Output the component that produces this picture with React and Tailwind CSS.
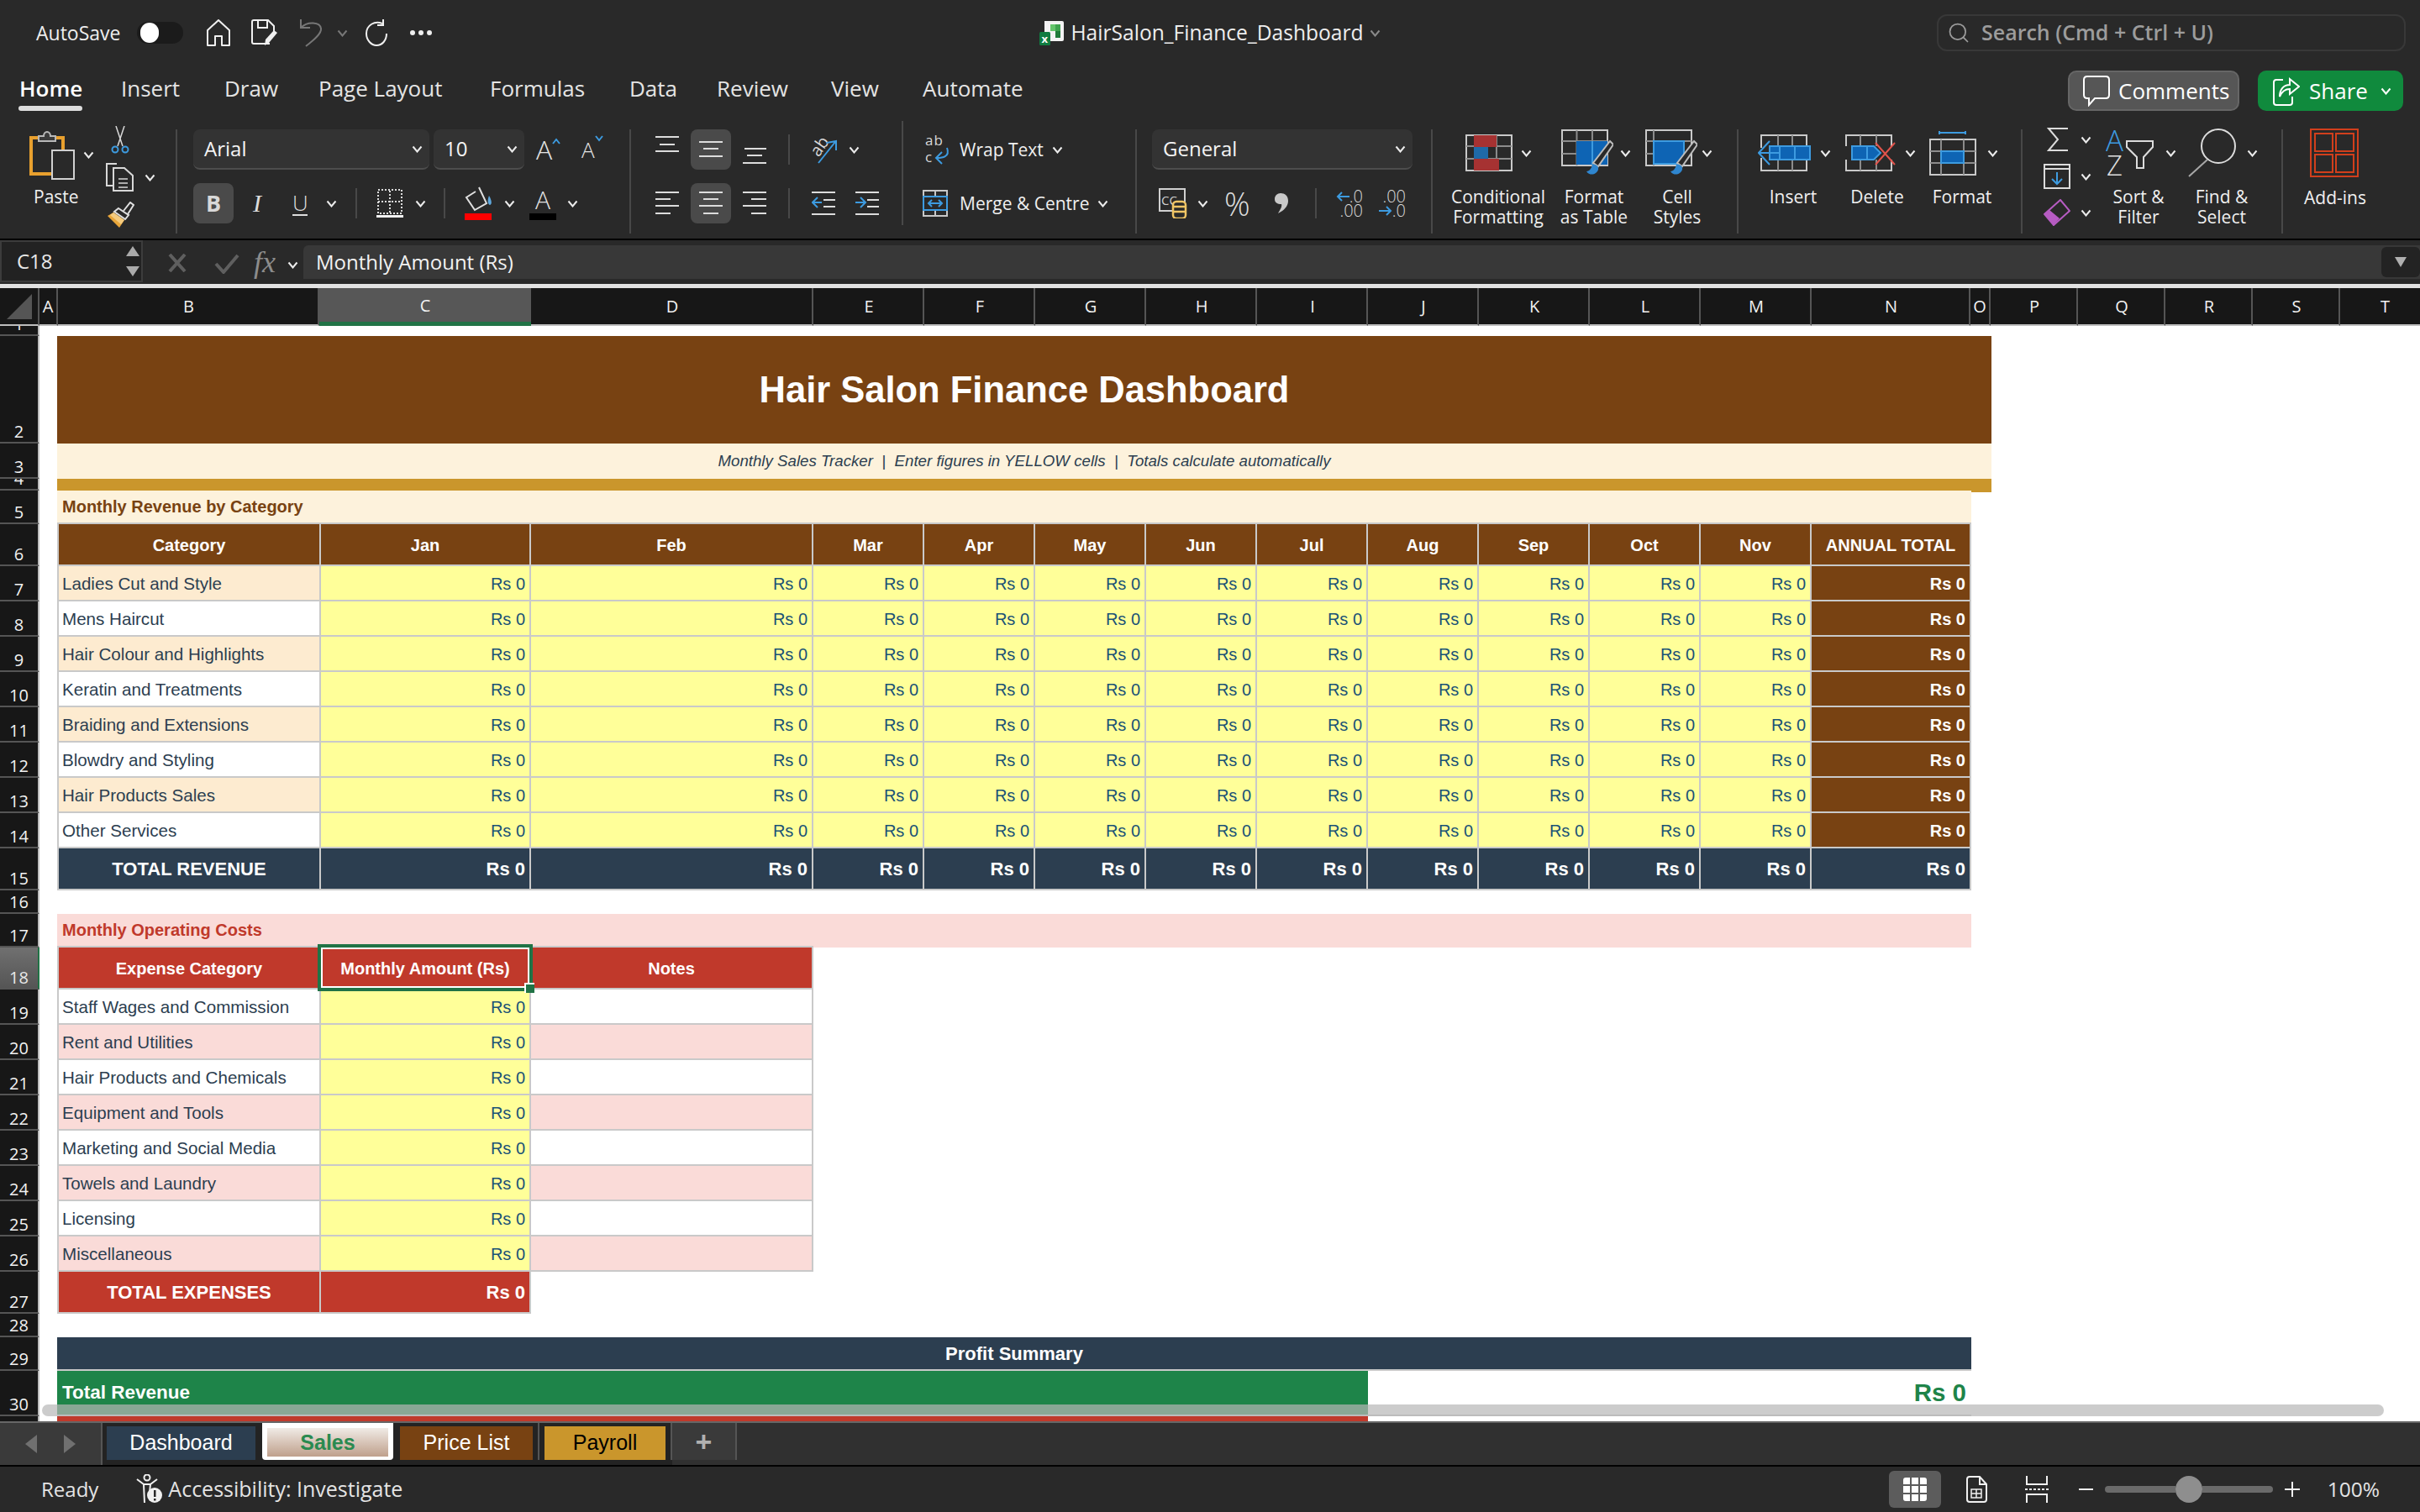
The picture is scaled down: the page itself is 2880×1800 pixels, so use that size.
import { Search } from 'lucide-react';

const TRACKS = 'grid-cols-[47px_21px_314px_250px_336px_repeat(9,132px)_190px_24px_1fr]';
const LINE = 'border-[#c9c9c9]';

const Chev = ({ className = '', color = '#ececec' }) => (
  <svg width="13" height="9" viewBox="0 0 13 9" className={`shrink-0 ${className}`}>
    <path d="M1.5 1.5 6.5 7.5 11.5 1.5" stroke={color} fill="none" strokeWidth="2" />
  </svg>
);

// three or four short bars, used by all the alignment buttons
const Lines = ({ rows, w = 28, h = 48, color = '#dcdcdc', children }) => (
  <svg width={w} height={h} viewBox={`0 0 ${w} ${h}`} className="shrink-0">
    {rows.map(([x, y, l], i) => (
      <rect key={i} x={x} y={y} width={l} height="2" fill={color} />
    ))}
    {children}
  </svg>
);

const PasteIcon = () => (
  <svg width="54" height="60" viewBox="0 0 54 60" className="shrink-0">
    <path d="M11 10H2V53H26" stroke="#e8a02e" strokeWidth="4" fill="none" />
    <path d="M29 10H40V24" stroke="#e8a02e" strokeWidth="4" fill="none" />
    <path d="M11 14V8H17A4 5 0 0 1 25 8H31V14Z" stroke="#b8b8b8" strokeWidth="2" fill="#3b3b3b" />
    <rect x="27" y="25" width="26" height="34" stroke="#d0d0d0" strokeWidth="2" fill="#292929" />
  </svg>
);

const Scissors = () => (
  <svg width="22" height="34" viewBox="0 0 22 34" className="shrink-0">
    <path d="M6 0 14 24M16 0 8 24" stroke="#d8d8d8" strokeWidth="1.5" fill="none" />
    <circle cx="5" cy="28" r="3.5" stroke="#3d9be0" strokeWidth="2" fill="none" />
    <circle cx="17" cy="28" r="3.5" stroke="#3d9be0" strokeWidth="2" fill="none" />
  </svg>
);

const CopyIcon = () => (
  <svg width="34" height="34" viewBox="0 0 34 34" className="shrink-0">
    <path d="M13 1H1V27H8" stroke="#d8d8d8" strokeWidth="2" fill="none" />
    <path d="M9 6H22L32 15V33H9Z" stroke="#d8d8d8" strokeWidth="2" fill="#292929" />
    <path d="M15 19H26M15 24H26M15 29H26" stroke="#d8d8d8" strokeWidth="1.5" />
  </svg>
);

const Painter = () => (
  <svg width="34" height="32" viewBox="0 0 34 32" className="shrink-0">
    <path d="M21 11 29 1 33 4 26 15" stroke="#e0e0e0" strokeWidth="2" fill="none" />
    <path d="M15 8 27 16 23 21 10 12Z" stroke="#e0e0e0" strokeWidth="2" fill="#292929" />
    <path d="M9 13 22 22 16 31 2 17Z" fill="#e9a63a" />
    <path d="M9 13 22 22 18 27 5 16Z" fill="#f4cb7f" />
  </svg>
);

const Bucket = () => (
  <svg width="34" height="32" viewBox="0 0 34 32" className="shrink-0">
    <path d="M17 1 26 20 12 28 2 13 13 6" stroke="#e0e0e0" strokeWidth="2" fill="none" />
    <path d="M29 11C32 16 33 21 30 22 27 21 27 16 29 11Z" fill="#5fa8dd" />
  </svg>
);

const BorderIcon = () => (
  <svg width="32" height="34" viewBox="0 0 32 34" className="shrink-0">
    <rect x="2" y="1" width="28" height="28" stroke="#dcdcdc" strokeWidth="2" strokeDasharray="2 2" fill="none" />
    <path d="M16 2V29M2 15H30" stroke="#dcdcdc" strokeWidth="2" strokeDasharray="2 2" />
    <rect x="0" y="31" width="32" height="3" fill="#f2f2f2" />
  </svg>
);

const Orient = () => (
  <svg width="36" height="36" viewBox="0 0 36 36" className="shrink-0">
    <text x="2" y="22" fontSize="20" fill="#d8d8d8" transform="rotate(-55 12 16)" fontFamily="Open Sans">ab</text>
    <path d="M11 34 31 9M21 10 32 8 32 19" stroke="#3d9be0" strokeWidth="2" fill="none" />
  </svg>
);

const Indent = ({ flip }) => (
  <Lines w={28} h={48} rows={[[0, 10, 28], [14, 19, 14], [14, 27, 14], [0, 36, 28]]}>
    <path d={flip ? 'M0 23H11M6 17 12 23 6 29' : 'M12 23H1M7 17 1 23 7 29'} stroke="#3d9be0" strokeWidth="2" fill="none" />
  </Lines>
);

const WrapIcon = () => (
  <svg width="30" height="38" viewBox="0 0 30 38" className="shrink-0">
    <text x="0" y="14" fontSize="17" fill="#d8d8d8" fontFamily="Open Sans" letterSpacing="1">ab</text>
    <text x="0" y="34" fontSize="17" fill="#d8d8d8" fontFamily="Open Sans">c</text>
    <path d="M26 17C30 28 20 29 14 29M20 22 13 29 20 36" stroke="#3d9be0" strokeWidth="2" fill="none" />
  </svg>
);

const MergeIcon = () => (
  <svg width="30" height="32" viewBox="0 0 30 32" className="shrink-0">
    <rect x="1" y="1" width="28" height="30" stroke="#c8c8c8" strokeWidth="2" fill="none" />
    <path d="M15 1V8M15 24V31" stroke="#c8c8c8" strokeWidth="2" />
    <rect x="1" y="8" width="28" height="16" stroke="#3d9be0" strokeWidth="2" fill="none" />
    <path d="M7 16H23M11 12 7 16 11 20M19 12 23 16 19 20" stroke="#3d9be0" strokeWidth="2" fill="none" />
  </svg>
);

const NumFormat = () => (
  <svg width="34" height="36" viewBox="0 0 34 36" className="shrink-0">
    <rect x="1" y="1" width="30" height="26" stroke="#d0d0d0" strokeWidth="2" fill="none" />
    <text x="3" y="20" fontSize="15" fill="#d0d0d0" fontFamily="Open Sans">CC</text>
    <rect x="17" y="16" width="15" height="20" rx="4" stroke="#f0c565" strokeWidth="2.5" fill="#292929" />
    <path d="M17 22H32M17 28H32" stroke="#f0c565" strokeWidth="2.5" />
  </svg>
);

const CommaIcon = () => (
  <svg width="18" height="24" viewBox="0 0 18 24" className="shrink-0">
    <path d="M8 0C13 0 17 3 17 9 17 15 13 20 5 24 8 19 10 16 9 13 4 13 1 11 1 7 1 3 4 0 8 0Z" fill="#c8c8c8" />
  </svg>
);

const DecMore = () => (
  <div className="h-[34px] w-[32px] text-[20px] font-light leading-[17px] text-[#d8d8d8]">
    <div className="flex items-center justify-end">
      <svg width="16" height="14" viewBox="0 0 16 14" className="shrink-0">
        <path d="M16 7H2M7 2 2 7 7 12" stroke="#3d9be0" strokeWidth="2" fill="none" />
      </svg>
      <span>.0</span>
    </div>
    <div className="text-right">.00</div>
  </div>
);

const DecLess = () => (
  <div className="h-[34px] w-[32px] text-[20px] font-light leading-[17px] text-[#d8d8d8]">
    <div className="text-right">.00</div>
    <div className="flex items-center justify-end">
      <svg width="16" height="14" viewBox="0 0 16 14" className="shrink-0">
        <path d="M0 7H14M9 2 14 7 9 12" stroke="#3d9be0" strokeWidth="2" fill="none" />
      </svg>
      <span>.0</span>
    </div>
  </div>
);

const TableFrame = ({ w = 56 }) => (
  <>
    <rect x="1" y="1" width={w - 2} height="42" stroke="#c9c9c9" strokeWidth="2" fill="none" />
    <path d={`M1 14H${w - 1}M1 29H${w - 1}M${w * 0.33} 1V43M${w * 0.66} 1V43`} stroke="#8c8c8c" strokeWidth="2" />
  </>
);

const CondIcon = () => (
  <svg width="56" height="44" viewBox="0 0 56 44" className="shrink-0">
    <TableFrame />
    <rect x="10" y="1" width="27" height="14" fill="#a63232" />
    <rect x="10" y="15" width="17" height="14" fill="#1f6aa8" />
    <rect x="10" y="29" width="30" height="14" fill="#a63232" />
  </svg>
);

const Brush = () => (
  <g>
    <path d="M58 14 62 18 44 44 38 40Z" fill="#292929" stroke="#bdbdbd" strokeWidth="2" />
    <path d="M30 50C34 50 36 46 37 42 41 41 45 44 44 48 42 54 34 56 30 50Z" fill="#2f86cf" />
  </g>
);

const TableStyleIcon = () => (
  <svg width="62" height="56" viewBox="0 0 62 56" className="shrink-0">
    <TableFrame />
    <rect x="18" y="14" width="37" height="28" fill="#0e64b4" />
    <path d="M37 14V42" stroke="#3d9be0" strokeWidth="2" />
    <Brush />
  </svg>
);

const CellStyleIcon = () => (
  <svg width="62" height="56" viewBox="0 0 62 56" className="shrink-0">
    <rect x="1" y="1" width="54" height="42" stroke="#c9c9c9" strokeWidth="2" fill="none" />
    <path d="M1 14H55M1 29H10M10 1V43" stroke="#8c8c8c" strokeWidth="2" />
    <rect x="10" y="14" width="36" height="27" fill="#0e64b4" stroke="#3d9be0" strokeWidth="2" />
    <Brush />
  </svg>
);

const InsertIcon = () => (
  <svg width="64" height="44" viewBox="0 0 64 44" className="shrink-0">
    <path d="M4 16V1H58V43H4V28" stroke="#c9c9c9" strokeWidth="2" fill="none" />
    <path d="M24 1V43M41 1V43" stroke="#8c8c8c" strokeWidth="2" />
    <rect x="14" y="14" width="48" height="16" fill="#0e64b4" stroke="#3d9be0" strokeWidth="2" />
    <path d="M26 14V30M44 14V30" stroke="#3d9be0" strokeWidth="2" />
    <path d="M14 8 1 22 14 36M1 22H26" stroke="#3d9be0" strokeWidth="2" fill="none" />
  </svg>
);

const DeleteIcon = () => (
  <svg width="62" height="44" viewBox="0 0 62 44" className="shrink-0">
    <path d="M1 14V1H55V14M1 30V43H55V30" stroke="#c9c9c9" strokeWidth="2" fill="none" />
    <path d="M18 1V14M37 1V14M18 30V43M37 30V43" stroke="#8c8c8c" strokeWidth="2" />
    <path d="M8 14H34L42 22 34 30H8Z" fill="#0e64b4" stroke="#3d9be0" strokeWidth="2" />
    <path d="M26 14V30" stroke="#3d9be0" strokeWidth="2" />
    <path d="M36 10 59 36M59 10 36 36" stroke="#e2534b" strokeWidth="2" />
  </svg>
);

const FormatIcon = () => (
  <svg width="56" height="54" viewBox="0 0 56 54" className="shrink-0">
    <path d="M12 1V5M43 1V5M12 3H43" stroke="#3d9be0" strokeWidth="2" />
    <rect x="1" y="11" width="54" height="42" stroke="#c9c9c9" strokeWidth="2" fill="none" />
    <path d="M1 25H55M1 39H55M14 11V53M41 11V53" stroke="#8c8c8c" strokeWidth="2" />
    <rect x="14" y="25" width="27" height="14" fill="#0e64b4" stroke="#3d9be0" strokeWidth="2" />
  </svg>
);

const SigmaIcon = () => (
  <svg width="26" height="30" viewBox="0 0 26 30" className="shrink-0">
    <path d="M25 2H2L13 15 2 28H25" stroke="#dcdcdc" strokeWidth="2" fill="none" />
  </svg>
);

const FillDown = () => (
  <svg width="32" height="30" viewBox="0 0 32 30" className="shrink-0">
    <rect x="1" y="1" width="30" height="28" stroke="#dcdcdc" strokeWidth="2" fill="none" />
    <path d="M1 6H31" stroke="#dcdcdc" strokeWidth="2" />
    <path d="M16 10V24M10 18 16 24 22 18" stroke="#3d9be0" strokeWidth="2" fill="none" />
  </svg>
);

const Eraser = () => (
  <svg width="32" height="32" viewBox="0 0 32 32" className="shrink-0">
    <path d="M20 1 31 14 12 31 1 18Z" stroke="#b65cc2" strokeWidth="2" fill="none" />
    <path d="M7 13 19 23 12 31 1 18Z" fill="#b65cc2" />
  </svg>
);

const SortIcon = () => (
  <svg width="58" height="56" viewBox="0 0 58 56" className="shrink-0">
    <text x="0" y="26" fontSize="35" fontWeight="300" fill="#3d9be0" fontFamily="Open Sans">A</text>
    <text x="1" y="55" fontSize="33" fontWeight="300" fill="#dcdcdc" fontFamily="Open Sans">Z</text>
    <path d="M25 14H56V21L45 33V46H37V33L25 21Z" stroke="#dcdcdc" strokeWidth="2" fill="none" />
  </svg>
);

const FindIcon = () => (
  <svg width="58" height="60" viewBox="0 0 58 60" className="shrink-0">
    <ellipse cx="36" cy="22" rx="20" ry="20" stroke="#dcdcdc" strokeWidth="2" fill="none" />
    <path d="M23 38 1 58" stroke="#a8a8a8" strokeWidth="2" />
  </svg>
);

const AddIns = () => (
  <svg width="58" height="58" viewBox="0 0 58 58" className="shrink-0">
    <rect x="1" y="1" width="56" height="56" stroke="#d13f1c" strokeWidth="2" fill="none" />
    <rect x="6" y="6" width="21" height="21" stroke="#d13f1c" strokeWidth="2" fill="none" />
    <rect x="31" y="6" width="21" height="21" stroke="#d13f1c" strokeWidth="2" fill="none" />
    <rect x="6" y="31" width="21" height="21" stroke="#d13f1c" strokeWidth="2" fill="none" />
    <rect x="31" y="31" width="21" height="21" stroke="#d13f1c" strokeWidth="2" fill="none" />
  </svg>
);

const ExcelDoc = () => (
  <svg width="30" height="30" viewBox="0 0 30 30" className="shrink-0">
    <path d="M6 1H27Q29 1 29 3V23Q29 25 27 25H6Z" fill="#f3f3f3" />
    <rect x="13" y="5" width="6" height="8" fill="#63c46a" />
    <rect x="19" y="5" width="6" height="8" fill="#3da34d" />
    <rect x="19" y="13" width="6" height="8" fill="#1f7a3a" />
    <rect x="0" y="14" width="13" height="16" rx="1.5" fill="#107c41" />
    <text x="2.5" y="27" fontSize="13" fontWeight="700" fill="#fff" fontFamily="Open Sans">x</text>
  </svg>
);

function BigBtn({ w, ml, icon, chevMl = 'ml-[10px]', lines }) {
  return (
    <div className={`flex flex-col ${w}`}>
      <div className={`flex h-[64px] items-center ${ml}`}>
        {icon}
        <Chev className={chevMl} />
      </div>
      <div className="mt-[8px] text-center leading-[24px]">
        {lines.map((l) => (
          <div key={l}>{l}</div>
        ))}
      </div>
    </div>
  );
}

const Sep = ({ className = 'mt-[14px]' }) => <div className={`h-[124px] w-[2px] shrink-0 bg-[#484848] ${className}`} />;
const SmallSep = () => <div className="h-[36px] w-[2px] shrink-0 bg-[#484848]" />;

function Dropdown({ w, label }) {
  return (
    <div className={`flex h-[48px] items-center justify-between rounded-[8px] border-b-2 border-[#4d4d4d] bg-[#333333] pl-[13px] pr-[8px] text-[24px] text-[#f4f4f4] ${w}`}>
      {label}
      <Chev />
    </div>
  );
}

function TitleBar() {
  return (
    <div className="flex h-[75px] items-center bg-[#292929] pt-[3px] text-[#eeeeee]">
      <span className="ml-[43px] text-[23px]">AutoSave</span>
      <div className="ml-[20px] flex h-[26px] w-[55px] items-center rounded-full bg-[#1b1b1b] pl-[4px]">
        <div className="h-[24px] w-[22px] rounded-full bg-white" />
      </div>
      <svg width="30" height="32" viewBox="0 0 30 32" className="ml-[27px]">
        <path d="M2 31V13L15 1 28 13V31H19V20H11V31Z" stroke="#f0f0f0" strokeWidth="2" fill="none" strokeLinejoin="round" />
      </svg>
      <svg width="32" height="32" viewBox="0 0 32 32" className="ml-[24px]">
        <path d="M22 29H3Q1 29 1 27V3Q1 1 3 1H20L27 8V14" stroke="#f0f0f0" strokeWidth="2" fill="none" />
        <path d="M8 1V10H19V1" stroke="#f0f0f0" strokeWidth="2" fill="none" />
        <path d="M16 31 17 24 27 13 31 16 21 28Z" fill="#f0f0f0" />
      </svg>
      <svg width="28" height="34" viewBox="0 0 28 34" className="ml-[25px]">
        <path d="M2 1V11H13M2 11C10 3 25 4 26 12 27 18 17 26 8 33" stroke="#777777" strokeWidth="2" fill="none" />
      </svg>
      <Chev className="ml-[17px]" color="#777777" />
      <svg width="28" height="32" viewBox="0 0 28 32" className="ml-[20px]">
        <path d="M21 5C12 1 2 7 2 17 2 25 8 31 14 31 21 31 26 25 26 17M22 0V7H15" stroke="#f0f0f0" strokeWidth="2" fill="none" />
      </svg>
      <span className="ml-[26px] flex gap-[4px]">
        <span className="h-[6px] w-[6px] rounded-full bg-[#eeeeee]" />
        <span className="h-[6px] w-[6px] rounded-full bg-[#eeeeee]" />
        <span className="h-[6px] w-[6px] rounded-full bg-[#eeeeee]" />
      </span>
      <div className="ml-[723px]"><ExcelDoc /></div>
      <span className="ml-[7px] text-[24.6px]">HairSalon_Finance_Dashboard</span>
      <Chev className="ml-[7px]" color="#8a8a8a" />
      <div className="ml-auto mr-[17px] flex h-[44px] w-[558px] items-center rounded-[12px] border-2 border-[#383838] pl-[10px] text-[25px] font-semibold text-[#9c9c9c]">
        <Search size={28} strokeWidth={1.5} />
        <span className="ml-[13px]">Search (Cmd + Ctrl + U)</span>
      </div>
    </div>
  );
}

function TabsRow() {
  const tabs = [
    ['Home', 'w-[121px] pl-[23px]'],
    ['Insert', 'w-[146px] pl-[23px]'],
    ['Draw', 'w-[112px]'],
    ['Page Layout', 'w-[204px]'],
    ['Formulas', 'w-[166px]'],
    ['Data', 'w-[104px]'],
    ['Review', 'w-[136px]'],
    ['View', 'w-[109px]'],
    ['Automate', 'w-[130px]'],
  ];
  return (
    <div className="flex h-[65px] bg-[#292929] text-[26px] font-medium text-[#e4e4e4]">
      <div className="flex">
        {tabs.map(([t, c], i) => (
          <div key={t} className={`relative h-[65px] pt-[11px] leading-[38px] ${c} ${i === 0 ? 'font-semibold text-white' : ''}`}>
            {t}
            {i === 0 && <div className="absolute bottom-[8px] left-[22px] h-[6px] w-[76px] rounded-full bg-[#dddddd]" />}
          </div>
        ))}
      </div>
      <div className="ml-auto mr-[20px] mt-[9px] flex h-[48px]">
        <div className="flex w-[204px] items-center rounded-[10px] border-2 border-[#666666] bg-[#565656] pl-[15px] text-white">
          <svg width="34" height="38" viewBox="0 0 34 38">
            <path d="M6 2H28Q32 2 32 6V24Q32 28 28 28H15L8 36V28H6Q2 28 2 24V6Q2 2 6 2Z" stroke="#ffffff" strokeWidth="2" fill="none" />
          </svg>
          <span className="ml-[9px]">Comments</span>
        </div>
        <div className="ml-[22px] flex w-[173px] items-center rounded-[10px] bg-[#108a3d] pl-[18px] text-white">
          <svg width="32" height="38" viewBox="0 0 32 38">
            <path d="M12 6H4Q1 6 1 9V33Q1 36 4 36H20Q23 36 23 33V26" stroke="#ffffff" strokeWidth="2" fill="none" />
            <path d="M8 26C8 17 13 12 20 12V5L31 14 20 23V17C15 17 11 19 8 26Z" stroke="#ffffff" strokeWidth="2" fill="none" />
          </svg>
          <span className="ml-[11px]">Share</span>
          <Chev className="ml-[15px]" color="#ffffff" />
        </div>
      </div>
    </div>
  );
}

function Ribbon() {
  return (
    <div className="flex h-[144px] bg-[#292929] text-[21px] leading-[26px] text-[#f0f0f0]">
      {/* clipboard */}
      <div className="flex w-[209px] shrink-0 pt-[10px]">
        <div className="ml-[35px] flex w-[75px] flex-col">
          <div className="mt-[4px] flex items-center">
            <PasteIcon />
            <Chev className="ml-[10px]" />
          </div>
          <span className="ml-[5px] mt-[7px]">Paste</span>
        </div>
        <div className="ml-[16px] flex flex-col">
          <div className="ml-[6px]"><Scissors /></div>
          <div className="mt-[10px] flex items-center"><CopyIcon /><Chev className="ml-[12px]" /></div>
          <div className="mt-[12px]"><Painter /></div>
        </div>
      </div>
      <Sep />
      {/* font */}
      <div className="flex w-[538px] shrink-0 flex-col gap-[16px] pl-[19px] pt-[14px]">
        <div className="flex h-[48px] items-center">
          <Dropdown w="w-[281px]" label="Arial" />
          <div className="ml-[5px]"><Dropdown w="w-[108px]" label="10" /></div>
          <span className="ml-[14px] flex w-[30px] items-start text-[32px] font-light leading-[36px] text-[#e4e4e4]">
            A
            <svg width="10" height="8" viewBox="0 0 10 8" className="mt-[4px] shrink-0"><path d="M1 7 5 2 9 7" stroke="#3d9be0" strokeWidth="2" fill="none" /></svg>
          </span>
          <span className="ml-[24px] flex w-[30px] items-start text-[26px] font-light leading-[36px] text-[#e4e4e4]">
            A
            <svg width="10" height="8" viewBox="0 0 10 8" className="mt-[1px] shrink-0"><path d="M1 1 5 6 9 1" stroke="#3d9be0" strokeWidth="2" fill="none" /></svg>
          </span>
        </div>
        <div className="flex h-[48px] items-center">
          <div className="flex h-[48px] w-[48px] items-center justify-center rounded-[8px] bg-[#4a4a4a] text-[27px] font-bold text-[#d8d8d8]">B</div>
          <span className="ml-[22px] w-[12px] text-center font-['Liberation_Serif',serif] text-[30px] italic text-[#dddddd]">I</span>
          <span className="ml-[36px] w-[18px] border-b-2 border-[#dddddd] text-center text-[26px] font-light leading-[28px] text-[#dddddd]">U</span>
          <Chev className="ml-[22px]" />
          <div className="ml-[22px]"><SmallSep /></div>
          <div className="ml-[23px]"><BorderIcon /></div>
          <Chev className="ml-[14px]" />
          <div className="ml-[21px]"><SmallSep /></div>
          <div className="ml-[23px] flex flex-col">
            <Bucket />
            <div className="h-[8px] w-[32px] bg-[#ff0000]" />
          </div>
          <Chev className="ml-[13px]" />
          <div className="ml-[17px] flex w-[32px] flex-col items-center">
            <span className="text-[30px] font-light leading-[32px] text-[#e4e4e4]">A</span>
            <div className="h-[8px] w-[32px] bg-black" />
          </div>
          <Chev className="ml-[13px]" />
        </div>
      </div>
      <Sep />
      {/* alignment */}
      <div className="flex w-[322px] shrink-0 flex-col gap-[16px] pl-[29px] pt-[14px]">
        <div className="flex h-[48px] items-center">
          <Lines rows={[[0, 8, 28], [5, 17, 18], [0, 25, 28]]} />
          <div className="ml-[14px] flex h-[48px] w-[48px] items-center justify-center rounded-[8px] bg-[#4a4a4a]">
            <Lines rows={[[0, 14, 28], [5, 22, 18], [0, 31, 28]]} />
          </div>
          <div className="ml-[14px]"><Lines rows={[[2, 22, 26], [5, 30, 18], [0, 39, 28]]} /></div>
          <div className="ml-[26px]"><SmallSep /></div>
          <div className="ml-[23px]"><Orient /></div>
          <Chev className="ml-[11px]" />
        </div>
        <div className="flex h-[48px] items-center">
          <Lines rows={[[0, 10, 28], [0, 18, 18], [0, 26, 28], [0, 35, 18]]} />
          <div className="ml-[14px] flex h-[48px] w-[48px] items-center justify-center rounded-[8px] bg-[#4a4a4a]">
            <Lines rows={[[0, 10, 28], [5, 18, 18], [0, 26, 28], [5, 35, 18]]} />
          </div>
          <div className="ml-[14px]"><Lines rows={[[0, 10, 28], [10, 18, 18], [0, 26, 28], [10, 35, 18]]} /></div>
          <div className="ml-[26px]"><SmallSep /></div>
          <div className="ml-[26px]"><Indent /></div>
          <div className="ml-[24px]"><Indent flip /></div>
        </div>
      </div>
      <Sep className="mt-[4px]" />
      {/* wrap / merge */}
      <div className="flex w-[276px] shrink-0 flex-col pl-[23px] pt-[18px]">
        <div className="flex h-[40px] items-center">
          <div className="ml-[3px]"><WrapIcon /></div>
          <span className="ml-[11px]">Wrap Text</span>
          <Chev className="ml-[10px]" />
        </div>
        <div className="mt-[24px] flex h-[40px] items-center">
          <MergeIcon />
          <span className="ml-[14px]">Merge &amp; Centre</span>
          <Chev className="ml-[10px]" />
        </div>
      </div>
      <Sep />
      {/* number */}
      <div className="flex w-[350px] shrink-0 flex-col gap-[16px] pl-[18px] pt-[14px]">
        <Dropdown w="w-[310px]" label="General" />
        <div className="flex h-[48px] items-center">
          <div className="ml-[8px]"><NumFormat /></div>
          <Chev className="ml-[12px]" />
          <span className="ml-[19px] w-[32px] text-[38px] font-light leading-[40px] text-[#dddddd]">%</span>
          <div className="ml-[27px]"><CommaIcon /></div>
          <div className="ml-[31px]"><SmallSep /></div>
          <div className="ml-[23px]"><DecMore /></div>
          <div className="ml-[19px]"><DecLess /></div>
        </div>
      </div>
      <Sep />
      {/* styles */}
      <div className="flex w-[362px] shrink-0 pl-[21px] pt-[10px]">
        <BigBtn w="w-[114px]" ml="ml-[18px]" icon={<CondIcon />} lines={['Conditional', 'Formatting']} />
        <BigBtn w="w-[114px]" ml="ml-[18px]" icon={<TableStyleIcon />} chevMl="ml-[8px]" lines={['Format', 'as Table']} />
        <BigBtn w="w-[84px]" ml="ml-[4px]" icon={<CellStyleIcon />} chevMl="ml-[5px]" lines={['Cell', 'Styles']} />
      </div>
      <Sep />
      {/* cells */}
      <div className="flex w-[336px] shrink-0 pl-[7px] pt-[10px]">
        <BigBtn w="w-[116px]" ml="ml-[16px]" icon={<InsertIcon />} lines={['Insert']} />
        <BigBtn w="w-[84px]" ml="ml-[4px]" icon={<DeleteIcon />} chevMl="ml-[9px]" lines={['Delete']} />
        <BigBtn w="w-[118px]" ml="ml-[20px]" icon={<FormatIcon />} chevMl="ml-[13px]" lines={['Format']} />
      </div>
      <Sep />
      {/* editing */}
      <div className="flex w-[308px] shrink-0 pt-[10px]">
        <div className="ml-[25px] flex w-[68px] flex-col">
          <div className="ml-[4px] flex h-[32px] items-center"><SigmaIcon /><Chev className="ml-[14px]" /></div>
          <div className="mt-[12px] flex h-[32px] items-center"><FillDown /><Chev className="ml-[12px]" /></div>
          <div className="mt-[10px] flex h-[34px] items-center"><Eraser /><Chev className="ml-[12px]" /></div>
        </div>
        <BigBtn w="w-[90px]" ml="ml-[6px]" icon={<SortIcon />} chevMl="ml-[13px]" lines={['Sort &', 'Filter']} />
        <BigBtn w="w-[108px]" ml="ml-[14px]" icon={<FindIcon />} chevMl="ml-[12px]" lines={['Find &', 'Select']} />
      </div>
      <Sep />
      {/* add-ins */}
      <div className="flex w-[124px] shrink-0 flex-col pt-[13px]">
        <div className="ml-[32px] h-[60px]"><AddIns /></div>
        <div className="mt-[9px] text-center">Add-ins</div>
      </div>
    </div>
  );
}

function FormulaBar() {
  return (
    <div className="flex h-[54px] border-t-2 border-black bg-[#292929]">
      <div className="flex h-[50px] w-[170px] items-center justify-between border-2 border-[#3c3c3c] bg-[#222222] pl-[18px] pr-[2px] text-[24px] text-[#e8e8e8]">
        C18
        <div className="flex flex-col gap-[12px]">
          <svg width="16" height="12" viewBox="0 0 16 12"><path d="M8 0 16 12H0Z" fill="#aaaaaa" /></svg>
          <svg width="16" height="12" viewBox="0 0 16 12"><path d="M8 12 16 0H0Z" fill="#aaaaaa" /></svg>
        </div>
      </div>
      <svg width="22" height="22" viewBox="0 0 22 22" className="ml-[30px] mt-[16px] shrink-0">
        <path d="M2 1 20 21M20 1 2 21" stroke="#5f5f5f" strokeWidth="4" />
      </svg>
      <svg width="30" height="24" viewBox="0 0 30 24" className="ml-[33px] mt-[16px] shrink-0">
        <path d="M2 12 11 22 28 2" stroke="#5f5f5f" strokeWidth="4" fill="none" />
      </svg>
      <span className="ml-[17px] mt-[5px] w-[30px] font-['Liberation_Serif',serif] text-[36px] italic leading-[42px] text-[#8c8c8c]">fx</span>
      <Chev className="ml-[10px] mt-[25px]" />
      <div className="ml-[6px] mt-[6px] flex h-[40px] flex-1 items-center rounded-tl-[6px] bg-[#383838] pl-[15px] text-[24px] text-[#f2f2f2]">
        Monthly Amount (Rs)
        <div className="ml-auto flex h-[36px] w-[46px] items-center justify-center rounded-[6px] bg-[#232323]">
          <svg width="14" height="12" viewBox="0 0 14 12"><path d="M0 0H14L7 12Z" fill="#b0b0b0" /></svg>
        </div>
      </div>
    </div>
  );
}

function ColumnHeader() {
  const cols = [
    ['A', 'w-[22px]'], ['B', 'w-[311px]'], ['C', 'w-[252px]'], ['D', 'w-[336px]'],
    ['E', 'w-[132px]'], ['F', 'w-[132px]'], ['G', 'w-[132px]'], ['H', 'w-[132px]'], ['I', 'w-[132px]'],
    ['J', 'w-[132px]'], ['K', 'w-[132px]'], ['L', 'w-[132px]'], ['M', 'w-[132px]'], ['N', 'w-[189px]'],
    ['O', 'w-[24px]'], ['P', 'w-[104px]'], ['Q', 'w-[104px]'], ['R', 'w-[104px]'], ['S', 'w-[104px]'], ['T', 'w-[107px]'],
  ];
  return (
    <div className="flex h-[50px] border-t-[5px] border-[#e2e2e2] bg-[#171717] text-[20px] text-[#f2f2f2]">
      <div className="flex w-[47px] shrink-0 items-center justify-center border-b-2 border-r-2 border-[#555555] border-b-[#bdbdbd]">
        <svg width="30" height="30" viewBox="0 0 30 30"><path d="M30 0V30H0Z" fill="#555555" /></svg>
      </div>
      {cols.map(([c, w]) =>
        c === 'C' ? (
          <div key={c} className={`flex shrink-0 items-center justify-center border-b-[5px] border-[#217346] bg-[#575757] pt-[2px] ${w}`}>{c}</div>
        ) : (
          <div key={c} className={`flex shrink-0 items-center justify-center border-b-2 border-r-2 border-[#555555] border-b-[#bdbdbd] ${c === 'A' || c === 'O' ? '' : 'pl-[2px]'} ${w}`}>{c}</div>
        )
      )}
    </div>
  );
}

function Row({ n, h, active, children }) {
  return (
    <div className={`grid ${TRACKS} ${h}`}>
      <div
        className={`flex items-end justify-center overflow-hidden border-b-2 border-r-2 border-b-[#555555] font-['Open_Sans',sans-serif] text-[20px] leading-[24px] ${
          active ? 'border-r-[#217346] bg-gradient-to-b from-[#707070] to-[#555555] text-[#e8e8e8]' : 'border-r-[#bdbdbd] bg-[#171717] text-[#f2f2f2]'
        }`}
      >
        {n}
      </div>
      <div />
      {children}
    </div>
  );
}

// one bordered table cell
function Cell({ className = '', first, right, children }) {
  return (
    <div className={`flex items-center border-b-2 border-r-2 ${LINE} ${first ? 'border-l-2' : ''} ${right ? 'justify-end pr-[5px]' : ''} ${className}`}>
      {children}
    </div>
  );
}

const HeadCell = ({ bg, first, children }) => (
  <Cell first={first} className={`justify-center pt-[2px] font-bold text-white ${bg}`}>{children}</Cell>
);

const MONTHS = ['Jan', 'Feb', 'Mar', 'Apr', 'May', 'Jun', 'Jul', 'Aug', 'Sep', 'Oct', 'Nov'];
const REVENUE = ['Ladies Cut and Style', 'Mens Haircut', 'Hair Colour and Highlights', 'Keratin and Treatments', 'Braiding and Extensions', 'Blowdry and Styling', 'Hair Products Sales', 'Other Services'];
const COSTS = ['Staff Wages and Commission', 'Rent and Utilities', 'Hair Products and Chemicals', 'Equipment and Tools', 'Marketing and Social Media', 'Towels and Laundry', 'Licensing', 'Miscellaneous'];

const Money = ({ bold, className = 'bg-[#ffff99]' }) => (
  <Cell right className={`pt-[2px] ${className} ${bold ? 'font-bold text-white' : 'text-[#1a5276]'}`}>Rs 0</Cell>
);

function Sheet() {
  return (
    <div className="h-[1304px] overflow-hidden bg-white font-['Liberation_Sans',Arial,sans-serif] text-[20px] text-[#2c3e50]">
      <Row n={1} h="h-[12px]" />
      <Row n={2} h="h-[128px]">
        <div className="col-span-14 flex items-center justify-center bg-[#784212] pt-[1px] text-[43.5px] font-bold text-white">Hair Salon Finance Dashboard</div>
      </Row>
      <Row n={3} h="h-[42px]">
        <div className="col-span-14 flex items-center justify-center whitespace-pre bg-[#fdf2dc] text-[18.7px] italic text-[#2c3e50]">
          {'Monthly Sales Tracker  |  Enter figures in YELLOW cells  |  Totals calculate automatically'}
        </div>
      </Row>
      <Row n={4} h="h-[14px]">
        <div className="col-span-14 bg-[#ca962c]" />
      </Row>
      <Row n={5} h="h-[40px]">
        <div className="col-span-13 flex items-center border-b-2 border-[#c9c9c9] bg-[#fdf2dc] pl-[6px] font-bold text-[#784212]">Monthly Revenue by Category</div>
        <div className="h-[2px] bg-[#ca962c]" />
      </Row>
      <Row n={6} h="h-[50px]">
        <HeadCell first bg="bg-[#784212]">Category</HeadCell>
        {MONTHS.map((m) => (
          <HeadCell key={m} bg="bg-[#784212]">{m}</HeadCell>
        ))}
        <HeadCell bg="bg-[#784212]">ANNUAL TOTAL</HeadCell>
      </Row>
      {REVENUE.map((name, i) => (
        <Row key={name} n={7 + i} h="h-[42px]">
          <Cell first className={`pl-[4px] pt-[2px] text-[20.6px] ${i % 2 === 0 ? 'bg-[#fdebd0]' : 'bg-white'}`}>{name}</Cell>
          {MONTHS.map((m) => (
            <Money key={m} />
          ))}
          <Money bold className="bg-[#784212]" />
        </Row>
      ))}
      <Row n={15} h="h-[50px]">
        <Cell first className="justify-center bg-[#2c3e50] text-[22px] font-bold text-white">TOTAL REVENUE</Cell>
        {MONTHS.map((m) => (
          <Cell key={m} right className="bg-[#2c3e50] text-[22px] font-bold text-white">Rs 0</Cell>
        ))}
        <Cell right className="bg-[#2c3e50] text-[22px] font-bold text-white">Rs 0</Cell>
      </Row>
      <Row n={16} h="h-[28px]" />
      <Row n={17} h="h-[40px]">
        <div className="col-span-3 flex items-center whitespace-nowrap border-b-2 border-[#c9c9c9] bg-[#fadbd8] pl-[6px] font-bold text-[#c0392b]">Monthly Operating Costs</div>
        <div className="col-span-10 bg-[#fadbd8]" />
      </Row>
      <Row n={18} h="h-[50px]" active>
        <HeadCell first bg="bg-[#c0392b]">Expense Category</HeadCell>
        <div className="relative flex items-center justify-center border-b-2 border-r-2 border-[#c9c9c9] bg-[#c0392b] pt-[2px] font-bold text-white">
          Monthly Amount (Rs)
          <div className="absolute -bottom-[4px] -left-[4px] -right-[4px] -top-[4px] border-[4px] border-[#217346]">
            <div className="h-full w-full border-2 border-white" />
          </div>
          <div className="absolute -bottom-[6px] -right-[6px] h-[12px] w-[12px] border-l-2 border-t-2 border-white bg-[#217346]" />
        </div>
        <HeadCell bg="bg-[#c0392b]">Notes</HeadCell>
      </Row>
      {COSTS.map((name, i) => (
        <Row key={name} n={19 + i} h="h-[42px]">
          <Cell first className={`pl-[4px] pt-[2px] text-[20.6px] ${i % 2 === 1 ? 'bg-[#fadbd8]' : 'bg-white'}`}>{name}</Cell>
          <Money />
          <Cell className={i % 2 === 1 ? 'bg-[#fadbd8]' : 'bg-white'} />
        </Row>
      ))}
      <Row n={27} h="h-[50px]">
        <Cell first className="justify-center bg-[#c0392b] text-[22px] font-bold text-white">TOTAL EXPENSES</Cell>
        <Cell right className="bg-[#c0392b] text-[22px] font-bold text-white">Rs 0</Cell>
      </Row>
      <Row n={28} h="h-[28px]" />
      <Row n={29} h="h-[40px]">
        <div className="col-span-13 flex items-center justify-center border-b-2 border-[#c9c9c9] bg-[#2c3e50] text-[22px] font-bold text-white">Profit Summary</div>
      </Row>
      <Row n={30} h="h-[54px]">
        <div className="col-span-8 flex items-end border-b-2 border-[#c9c9c9] bg-[#1e8449] pb-[9px] pl-[6px] text-[22.5px] font-bold text-white">Total Revenue</div>
        <div className="col-span-5 flex items-end justify-end border-b-2 border-[#c9c9c9] pb-[4px] pr-[6px] text-[29.5px] font-bold text-[#1e8449]">Rs 0</div>
      </Row>
      <Row n={31} h="h-[42px]">
        <div className="col-span-8 bg-[#c0392b]" />
      </Row>
    </div>
  );
}

function SheetTabs() {
  return (
    <div className="flex h-[52px] border-t-2 border-[#666666] bg-[#303030] font-['Liberation_Sans',Arial,sans-serif] text-[25px]">
      <div className="flex w-[120px] items-center bg-[#3a3a3a] pl-[30px]">
        <svg width="14" height="22" viewBox="0 0 14 22"><path d="M14 0V22L0 11Z" fill="#707070" /></svg>
        <svg width="14" height="22" viewBox="0 0 14 22" className="ml-[32px]"><path d="M0 0V22L14 11Z" fill="#707070" /></svg>
      </div>
      <div className="flex h-[50px] items-start border-l-2 border-[#555555] bg-[#232323]">
        <div className="ml-[5px] mt-[4px] flex h-[40px] w-[177px] items-center justify-center bg-[#2c3e50] text-white">Dashboard</div>
        <div className="ml-[8px] h-[44px] w-[156px] rounded-b-[4px] border-x-[6px] border-b-[4px] border-t-[6px] border-white bg-gradient-to-b from-[#f0ebe6] to-[#bfa08c] text-center font-bold leading-[34px] text-[#2a8a50]">Sales</div>
        <div className="ml-[8px] mt-[4px] flex h-[40px] w-[158px] items-center justify-center bg-[#784212] text-white">Price List</div>
        <div className="ml-[6px] h-[44px] w-[2px] bg-[#555555]" />
        <div className="ml-[6px] mt-[4px] flex h-[40px] w-[144px] items-center justify-center bg-[#ca962c] text-black">Payroll</div>
        <div className="ml-[6px] h-[44px] w-[2px] bg-[#555555]" />
      </div>
      <div className="flex h-[44px] w-[77px] items-center justify-center border-r-2 border-[#555555] bg-[#3a3a3a] text-[34px] font-bold text-[#b0b0b0]">+</div>
    </div>
  );
}

function StatusBar() {
  return (
    <div className="flex h-[56px] items-center border-t-2 border-black bg-[#292929] text-[24px] text-[#e4e4e4]">
      <span className="ml-[49px]">Ready</span>
      <svg width="32" height="36" viewBox="0 0 32 36" className="ml-[45px] shrink-0">
        <circle cx="13" cy="4" r="3.5" stroke="#f0f0f0" strokeWidth="2" fill="none" />
        <path d="M1 6 9 12H17L25 6M9 12 10 34M17 12 16 22" stroke="#f0f0f0" strokeWidth="2" fill="none" />
        <circle cx="22" cy="25" r="9" fill="#f0f0f0" />
        <rect x="21" y="19" width="2.5" height="8" fill="#292929" />
        <rect x="21" y="29" width="2.5" height="2.5" fill="#292929" />
      </svg>
      <span className="ml-[6px] text-[25px]">Accessibility: Investigate</span>
      <div className="ml-auto mr-[48px] flex items-center">
        <div className="flex h-[44px] w-[62px] items-center justify-center rounded-[6px] bg-[#5c5c5c]">
          <svg width="30" height="28" viewBox="0 0 30 28">
            <path d="M4 0H9V8H1V3Q1 0 4 0ZM11 0H19V8H11ZM21 0H26Q29 0 29 3V8H21ZM1 10H9V18H1ZM11 10H19V18H11ZM21 10H29V18H21ZM1 20H9V28H4Q1 28 1 25ZM11 20H19V28H11ZM21 20H29V25Q29 28 26 28H21Z" fill="#ffffff" />
          </svg>
        </div>
        <svg width="26" height="32" viewBox="0 0 26 32" className="ml-[30px]">
          <path d="M4 1H16L24 10V28Q24 31 21 31H4Q1 31 1 28V4Q1 1 4 1ZM16 1V10H24" stroke="#f0f0f0" strokeWidth="2" fill="none" />
          <path d="M6 16H18V26H6ZM12 16V26M6 21H18" stroke="#f0f0f0" strokeWidth="1.5" fill="none" />
        </svg>
        <svg width="28" height="32" viewBox="0 0 28 32" className="ml-[44px]">
          <path d="M2 0V10H26V0M2 32V22H26V32" stroke="#f0f0f0" strokeWidth="2" fill="none" />
          <path d="M0 16H28" stroke="#f0f0f0" strokeWidth="2" strokeDasharray="3 2" />
        </svg>
        <div className="ml-[36px] h-[2px] w-[17px] bg-[#f0f0f0]" />
        <div className="ml-[14px] flex h-[32px] w-[200px] items-center">
          <div className="h-[8px] flex-1 rounded-l-full bg-[#6a6a6a]" />
          <div className="h-[32px] w-[32px] rounded-full bg-[#8e8e8e]" />
          <div className="h-[8px] w-[84px] rounded-r-full bg-[#6a6a6a]" />
        </div>
        <svg width="18" height="18" viewBox="0 0 18 18" className="ml-[14px]">
          <path d="M9 0V18M0 9H18" stroke="#f0f0f0" strokeWidth="2" />
        </svg>
        <span className="ml-[33px] text-[24.5px]">100%</span>
      </div>
    </div>
  );
}

export default function App() {
  return (
    <div className="relative flex h-[1800px] w-[2880px] flex-col overflow-hidden bg-[#292929] font-['Open_Sans',sans-serif]">
      <TitleBar />
      <TabsRow />
      <Ribbon />
      <FormulaBar />
      <ColumnHeader />
      <Sheet />
      <SheetTabs />
      <StatusBar />
      {/* overlay scrollbar */}
      <div className="absolute left-[50px] top-[1672px] h-[14px] w-[2787px] rounded-full bg-[#b6b6b6]/70" />
    </div>
  );
}
